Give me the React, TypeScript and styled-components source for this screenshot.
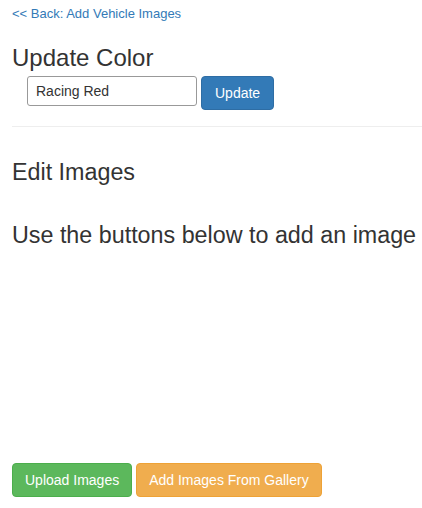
import React from "react";
import styled, { createGlobalStyle } from "styled-components";

const Global = createGlobalStyle`
  html, body { margin: 0; padding: 0; background: #fff; }
  body { font-family: "Liberation Sans", Arial, sans-serif; color: #333; }
  * { box-sizing: border-box; }
`;

const Page = styled.div`
  min-height: 100vh;
  display: flex;
  flex-direction: column;
  padding: 5px 0 11px 12px;
`;

const BackLink = styled.a`
  font-size: 13px;
  line-height: 18px;
  color: #337ab7;
  text-decoration: none;
  align-self: flex-start;
`;

const Heading = styled.h3`
  margin: 22px 0 0;
  font-size: 24px;
  font-weight: 400;
  line-height: 26px;
`;

const FormRow = styled.form`
  display: flex;
  align-items: flex-start;
  gap: 4px;
  padding-left: 15px;
  margin-top: 5px;
`;

const Input = styled.input`
  width: 170px;
  height: 30px;
  padding: 0 8px;
  font-family: inherit;
  font-size: 14px;
  color: #333;
  border: 1px solid #999;
  border-radius: 3px;
  outline: none;
`;

const Button = styled.button<{ $bg: string; $border: string; $pad?: number }>`
  height: 34px;
  padding: 0 ${(p) => p.$pad ?? 12}px;
  font-family: inherit;
  font-size: 14px;
  color: #fff;
  background: ${(p) => p.$bg};
  border: 1px solid ${(p) => p.$border};
  border-radius: 4px;
  cursor: pointer;
`;

const Rule = styled.hr`
  margin: 16px 0 0;
  border: 0;
  border-top: 1px solid #eee;
`;

const SubHeading = styled.h4<{ $top: number }>`
  margin: ${(p) => p.$top}px 0 0;
  font-size: 23.3px;
  font-weight: 400;
  line-height: 26px;
`;

const Actions = styled.div`
  margin-top: auto;
  display: flex;
  gap: 4px;
`;

export default function App() {
  return (
    <>
      <Global />
      <Page>
        <BackLink href="#">&lt;&lt; Back: Add Vehicle Images</BackLink>
        <Heading>Update Color</Heading>
        <FormRow onSubmit={(e) => e.preventDefault()}>
          <Input defaultValue="Racing Red" />
          <Button $bg="#337ab7" $border="#2e6da4" $pad={13}>Update</Button>
        </FormRow>
        <Rule />
        <SubHeading $top={32}>Edit Images</SubHeading>
        <SubHeading $top={37}>Use the buttons below to add an image</SubHeading>
        <Actions>
          <Button $bg="#5cb85c" $border="#4cae4c">Upload Images</Button>
          <Button $bg="#f0ad4e" $border="#eea236">Add Images From Gallery</Button>
        </Actions>
      </Page>
    </>
  );
}
